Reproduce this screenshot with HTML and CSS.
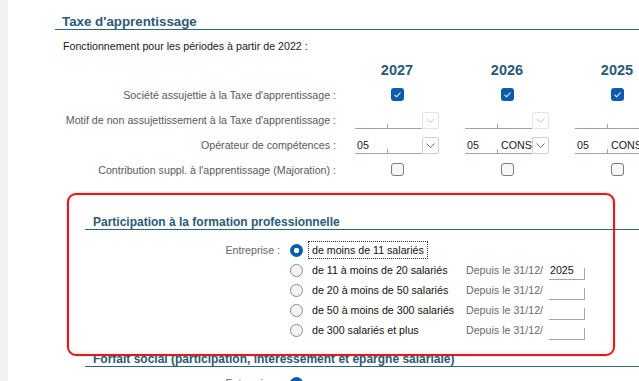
FILE: index.html
```html
<!DOCTYPE html>
<html>
  <head>
    <meta charset="utf-8">
    <title>Taxe d'apprentissage</title>
    <link rel="stylesheet" href="styles.css">
  </head>
<body>
  <div class="page">
    <div class="sidebar"></div>

    <div class="content">

      <section class="taxe">
        <h2 class="section-title">Taxe d'apprentissage</h2>
        <p class="intro">Fonctionnement pour les périodes à partir de 2022 :</p>

        <div class="year-grid">
          <div></div>
          <div class="year">2027</div>
          <div class="year">2026</div>
          <div class="year">2025</div>

          <div class="label">Société assujettie à la Taxe d'apprentissage :</div>
          <div class="cell"><span class="check on"><svg width="13" height="13" viewBox="0 0 13 13"><path d="M3.6 6.9 L5.6 8.8 L9.5 4.5" fill="none" stroke="#fff" stroke-width="1.1"/></svg></span></div>
          <div class="cell"><span class="check on"><svg width="13" height="13" viewBox="0 0 13 13"><path d="M3.6 6.9 L5.6 8.8 L9.5 4.5" fill="none" stroke="#fff" stroke-width="1.1"/></svg></span></div>
          <div class="cell"><span class="check on"><svg width="13" height="13" viewBox="0 0 13 13"><path d="M3.6 6.9 L5.6 8.8 L9.5 4.5" fill="none" stroke="#fff" stroke-width="1.1"/></svg></span></div>

          <div class="label">Motif de non assujettissement à la Taxe d'apprentissage :</div>
          <div class="cell">
            <div class="combo">
              <div class="combo-field"><span class="combo-code"></span><span class="combo-name"></span></div>
              <span class="combo-btn disabled"><svg width="11" height="7" viewBox="0 0 11 7"><path d="M1.5 1.5 L5.5 5.5 L9.5 1.5" fill="none" stroke="#c8c8c8"/></svg></span>
            </div>
          </div>
          <div class="cell">
            <div class="combo">
              <div class="combo-field"><span class="combo-code"></span><span class="combo-name"></span></div>
              <span class="combo-btn disabled"><svg width="11" height="7" viewBox="0 0 11 7"><path d="M1.5 1.5 L5.5 5.5 L9.5 1.5" fill="none" stroke="#c8c8c8"/></svg></span>
            </div>
          </div>
          <div class="cell">
            <div class="combo">
              <div class="combo-field"><span class="combo-code"></span><span class="combo-name"></span></div>
              <span class="combo-btn disabled"><svg width="11" height="7" viewBox="0 0 11 7"><path d="M1.5 1.5 L5.5 5.5 L9.5 1.5" fill="none" stroke="#c8c8c8"/></svg></span>
            </div>
          </div>

          <div class="label">Opérateur de compétences :</div>
          <div class="cell">
            <div class="combo">
              <div class="combo-field"><span class="combo-code">05</span><span class="combo-name"></span></div>
              <span class="combo-btn"><svg width="11" height="7" viewBox="0 0 11 7"><path d="M1.5 1.5 L5.5 5.5 L9.5 1.5" fill="none" stroke="#6e6e6e"/></svg></span>
            </div>
          </div>
          <div class="cell">
            <div class="combo">
              <div class="combo-field"><span class="combo-code">05</span><span class="combo-name">CONSTRUCTYS</span></div>
              <span class="combo-btn"><svg width="11" height="7" viewBox="0 0 11 7"><path d="M1.5 1.5 L5.5 5.5 L9.5 1.5" fill="none" stroke="#6e6e6e"/></svg></span>
            </div>
          </div>
          <div class="cell">
            <div class="combo">
              <div class="combo-field"><span class="combo-code">05</span><span class="combo-name">CONSTRUCTYS</span></div>
              <span class="combo-btn"><svg width="11" height="7" viewBox="0 0 11 7"><path d="M1.5 1.5 L5.5 5.5 L9.5 1.5" fill="none" stroke="#6e6e6e"/></svg></span>
            </div>
          </div>

          <div class="label">Contribution suppl. à l'apprentissage (Majoration) :</div>
          <div class="cell"><span class="check"></span></div>
          <div class="cell"><span class="check"></span></div>
          <div class="cell"><span class="check"></span></div>
        </div>
      </section>

      <section class="sub">
        <h2 class="section-title">Participation à la formation professionnelle</h2>
        <div class="radio-grid">
          <div class="radio-label">Entreprise :</div>
          <span class="radio on"></span>
          <span class="option focus">de moins de 11 salariés</span>
          <div></div>

          <div></div>
          <span class="radio"></span>
          <span class="option">de 11 à moins de 20 salariés</span>
          <div class="since">Depuis le 31/12/<span class="since-box">2025</span></div>

          <div></div>
          <span class="radio"></span>
          <span class="option">de 20 à moins de 50 salariés</span>
          <div class="since">Depuis le 31/12/<span class="since-box"></span></div>

          <div></div>
          <span class="radio"></span>
          <span class="option">de 50 à moins de 300 salariés</span>
          <div class="since">Depuis le 31/12/<span class="since-box"></span></div>

          <div></div>
          <span class="radio"></span>
          <span class="option">de 300 salariés et plus</span>
          <div class="since">Depuis le 31/12/<span class="since-box"></span></div>
        </div>
      </section>

      <section class="sub forfait">
        <h2 class="section-title">Forfait social (participation, intéressement et épargne salariale)</h2>
        <div class="radio-grid tail">
          <div class="radio-label">Entreprise :</div>
          <span class="radio on"></span>
          <div></div>
          <div></div>
        </div>
      </section>

    </div>

    <div class="highlight"></div>
  </div>
</body>
</html>
```

FILE: styles.css
```css
html, body {margin: 0; padding: 0; background: #fff; overflow: hidden;}

body {
  font-family: "Liberation Sans", Arial, sans-serif;
  font-size: 10.67px;
  color: #1a1a1a;
}

.page {
  position: relative;
  display: flex;
  height: 381px;
}

.sidebar {
  flex: none;
  width: 8px;
  background: #f1f1f1;
}

.content {
  flex: 1;
  min-width: 0;
  overflow: hidden;
}

/* section headers */
.section-title {
  margin: 15px 0 0 47px;
  padding-left: 7px;
  font-size: 13.33px;
  line-height: 14px;
  font-weight: bold;
  color: #2b5b78;
  border-bottom: 1px solid #30657f;
  white-space: nowrap;
}

.intro {
  margin: 9px 0 0 55px;
  line-height: 14px;
}

/* yearly grid */
.year-grid {
  display: grid;
  grid-template-columns: 287px repeat(3, 110px);
  grid-auto-rows: 25px;
  align-items: center;
  margin: 4px 0 0 47px;
}

.year {
  text-align: center;
  font-size: 14.5px;
  font-weight: bold;
  color: #2b5b78;
}

.label {
  text-align: right;
  padding-right: 6px;
  color: #5a5a5a;
  white-space: nowrap;
}

.cell {
  display: flex;
  justify-content: center;
}

.check {
  display: block;
  width: 13px;
  height: 13px;
  box-sizing: border-box;
  border: 1px solid #7c7c7c;
  border-radius: 3px;
  background: #f7f7f7;
}

.check.on {
  border: none;
  background: #0b5cad;
}

.check svg {display: block;}

.combo {
  display: flex;
  align-items: flex-end;
  margin-top: 1px;
}

.combo-field {
  display: flex;
  width: 67px;
  height: 16px;
  border-bottom: 1px solid #a3a3a3;
}

.combo-code {
  width: 32px;
  padding-left: 2px;
  box-sizing: border-box;
  line-height: 16px;
}

.combo-name {
  flex: 1;
  min-width: 0;
  overflow: hidden;
  white-space: nowrap;
  padding-left: 4px;
  line-height: 16px;
  background: linear-gradient(#a3a3a3, #a3a3a3) left bottom / 1px 4px no-repeat;
}

.combo-btn {
  display: flex;
  align-items: center;
  justify-content: center;
  width: 17px;
  height: 17px;
  box-sizing: border-box;
  border: 1px solid #d0d0d0;
  border-radius: 2px;
  background: #fff;
}

.combo-btn.disabled {border-color: #e4e4e4;}

/* sub sections */
.sub {margin-top: 33px;}

.sub .section-title {
  margin: 0 0 0 77px;
  padding-left: 8px;
  font-size: 12px;
}

.sub.forfait {margin-top: 12px;}

.radio-grid {
  display: grid;
  grid-template-columns: 205px 18px 158px auto;
  grid-auto-rows: 20px;
  align-items: center;
  margin: 10px 0 0 77px;
}

.radio-grid.tail {margin-top: 6px;}

.radio-label {
  text-align: right;
  padding-right: 10px;
  color: #666;
}

.radio {
  display: block;
  width: 13px;
  height: 13px;
  box-sizing: border-box;
  border: 1px solid #8a8a8a;
  border-radius: 50%;
  background: #f4f4f4;
}

.radio.on {
  border: none;
  background: radial-gradient(circle, #fff 0 2.4px, #0b5db1 3px);
}

.option {
  justify-self: start;
  padding: 0 3px;
  border: 1px dotted transparent;
  line-height: 16px;
  white-space: nowrap;
  color: #111;
}

.option.focus {border-color: #333;}

.since {
  display: flex;
  align-items: center;
  color: #6a6a6a;
  white-space: nowrap;
}

.since-box {
  margin: 2px 0 0 6px;
  width: 36px;
  height: 17px;
  box-sizing: border-box;
  padding-left: 1px;
  border-bottom: 1px solid #a5a5a5;
  background: linear-gradient(#a5a5a5, #a5a5a5) right bottom / 1px 11px no-repeat;
  color: #111;
  line-height: 14px;
}

/* red annotation frame */
.highlight {
  position: absolute;
  left: 67px;
  top: 193px;
  width: 548px;
  height: 163px;
  box-sizing: border-box;
  border: 2px solid #e11b1b;
  border-radius: 9px;
  box-shadow: 0 0 2px rgba(0, 0, 0, .35), inset 0 0 5px rgba(0, 0, 0, .12);
  pointer-events: none;
}
```
